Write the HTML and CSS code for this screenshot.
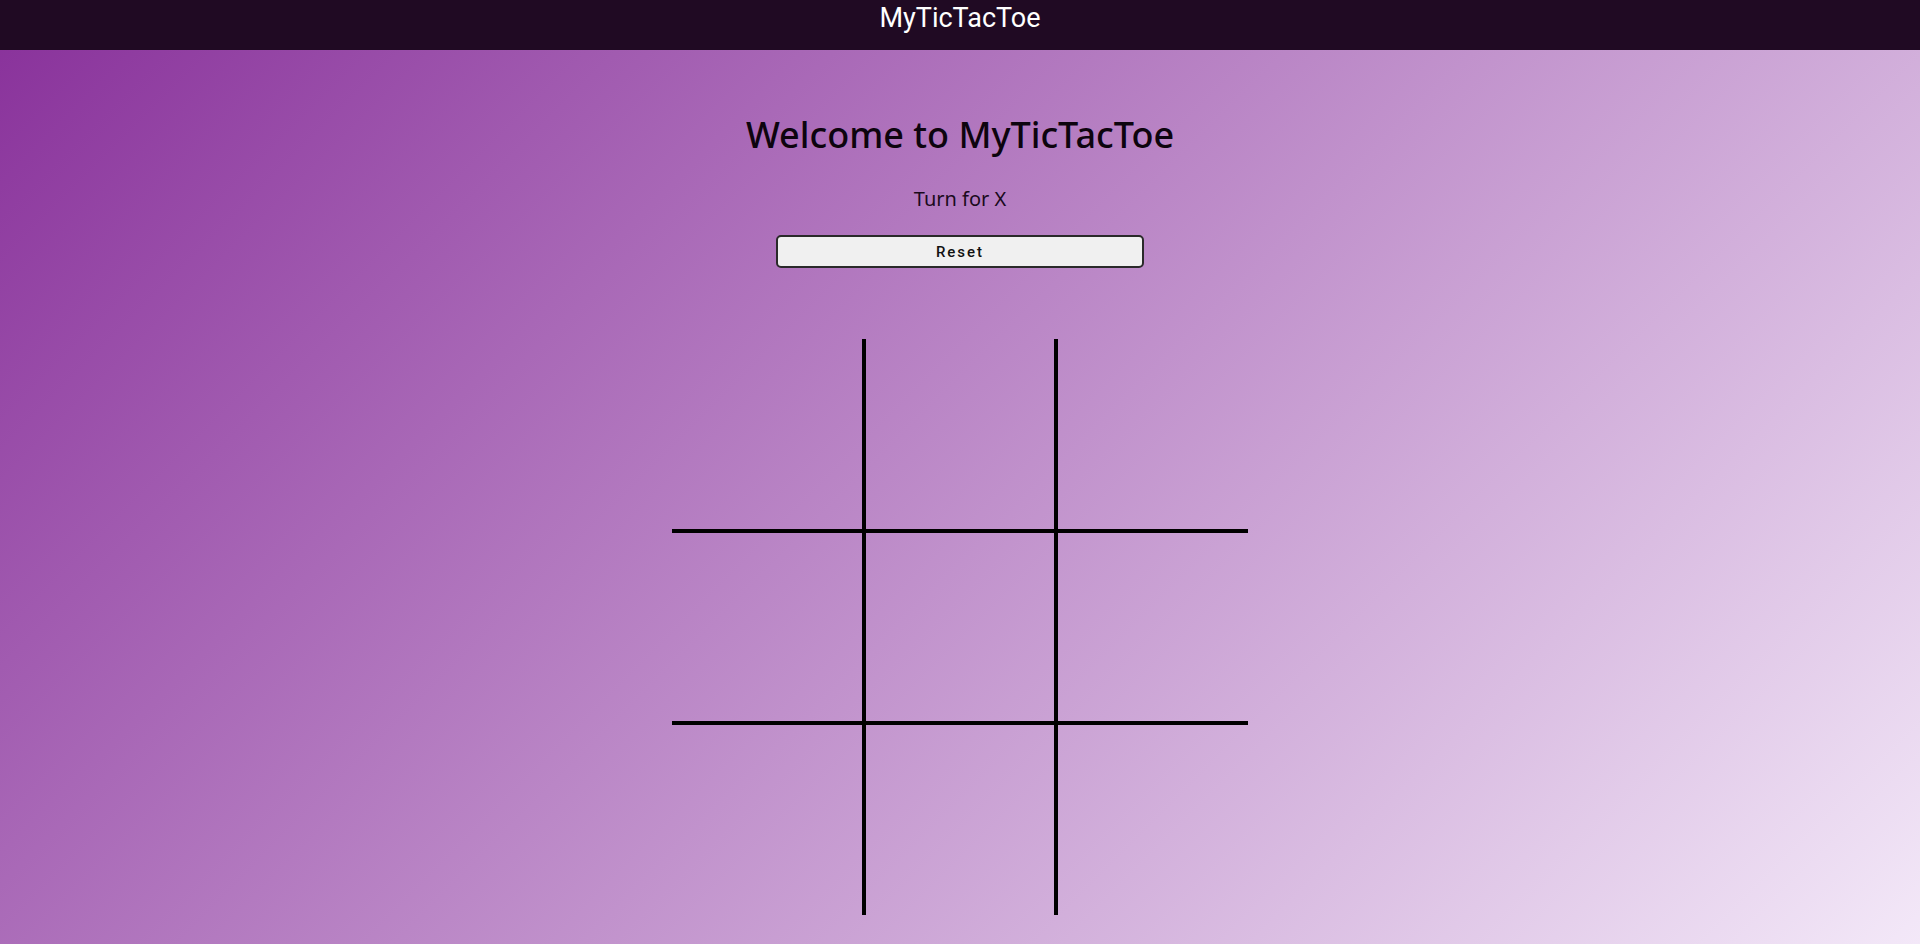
FILE: index.html
```html
<!DOCTYPE html>
<html lang="en">
<head>
<meta charset="utf-8">
<title>MyTicTacToe</title>
<link rel="stylesheet" href="styles.css">
</head>
<body>
<header class="topbar"><span class="brand">MyTicTacToe</span></header>
<main class="game">
  <h1 class="title">Welcome to MyTicTacToe</h1>
  <p class="status">Turn for X</p>
  <button class="reset" type="button">Reset</button>
  <div class="board">
    <div class="cell"></div><div class="cell"></div><div class="cell"></div>
    <div class="cell"></div><div class="cell"></div><div class="cell"></div>
    <div class="cell"></div><div class="cell"></div><div class="cell"></div>
  </div>
</main>
</body>
</html>
```
FILE: styles.css
```css
html, body {
  margin: 0;
  padding: 0;
}
body {
  min-height: 100vh;
  background: linear-gradient(135deg, #88309a, #f3e8f8);
  font-family: "Noto Sans", "DejaVu Sans", sans-serif;
  overflow: hidden;
}
.topbar {
  height: 50px;
  background: #200a23;
  display: flex;
  justify-content: center;
  align-items: flex-start;
}
.brand {
  font-family: Roboto, "Liberation Sans", sans-serif;
  color: #ffffff;
  font-size: 27px;
  line-height: 36px;
}
.game {
  display: flex;
  flex-direction: column;
  align-items: center;
}
.title {
  margin: 63px 0 0;
  font-size: 36px;
  line-height: 44px;
  font-weight: 500;
  color: #0d040e;
}
.status {
  margin: 29px 0 0;
  font-size: 20px;
  line-height: 26px;
  color: #1a0a1c;
}
.reset {
  margin-top: 23px;
  width: 368px;
  height: 33px;
  border: 2px solid #2a2a2a;
  border-radius: 5px;
  background: #f0f0f0;
  font-family: Roboto, "Liberation Sans", sans-serif;
  font-size: 15px;
  font-weight: 500;
  letter-spacing: 2px;
  color: #111111;
  padding: 0;
}
.board {
  margin-top: 71px;
  display: grid;
  grid-template-columns: repeat(3, 192px);
  grid-template-rows: repeat(3, 192px);
}
.cell {
  box-sizing: border-box;
  border: 2px solid #000000;
}
.cell:nth-child(-n+3) { border-top: none; }
.cell:nth-child(n+7) { border-bottom: none; }
.cell:nth-child(3n+1) { border-left: none; }
.cell:nth-child(3n) { border-right: none; }
```
